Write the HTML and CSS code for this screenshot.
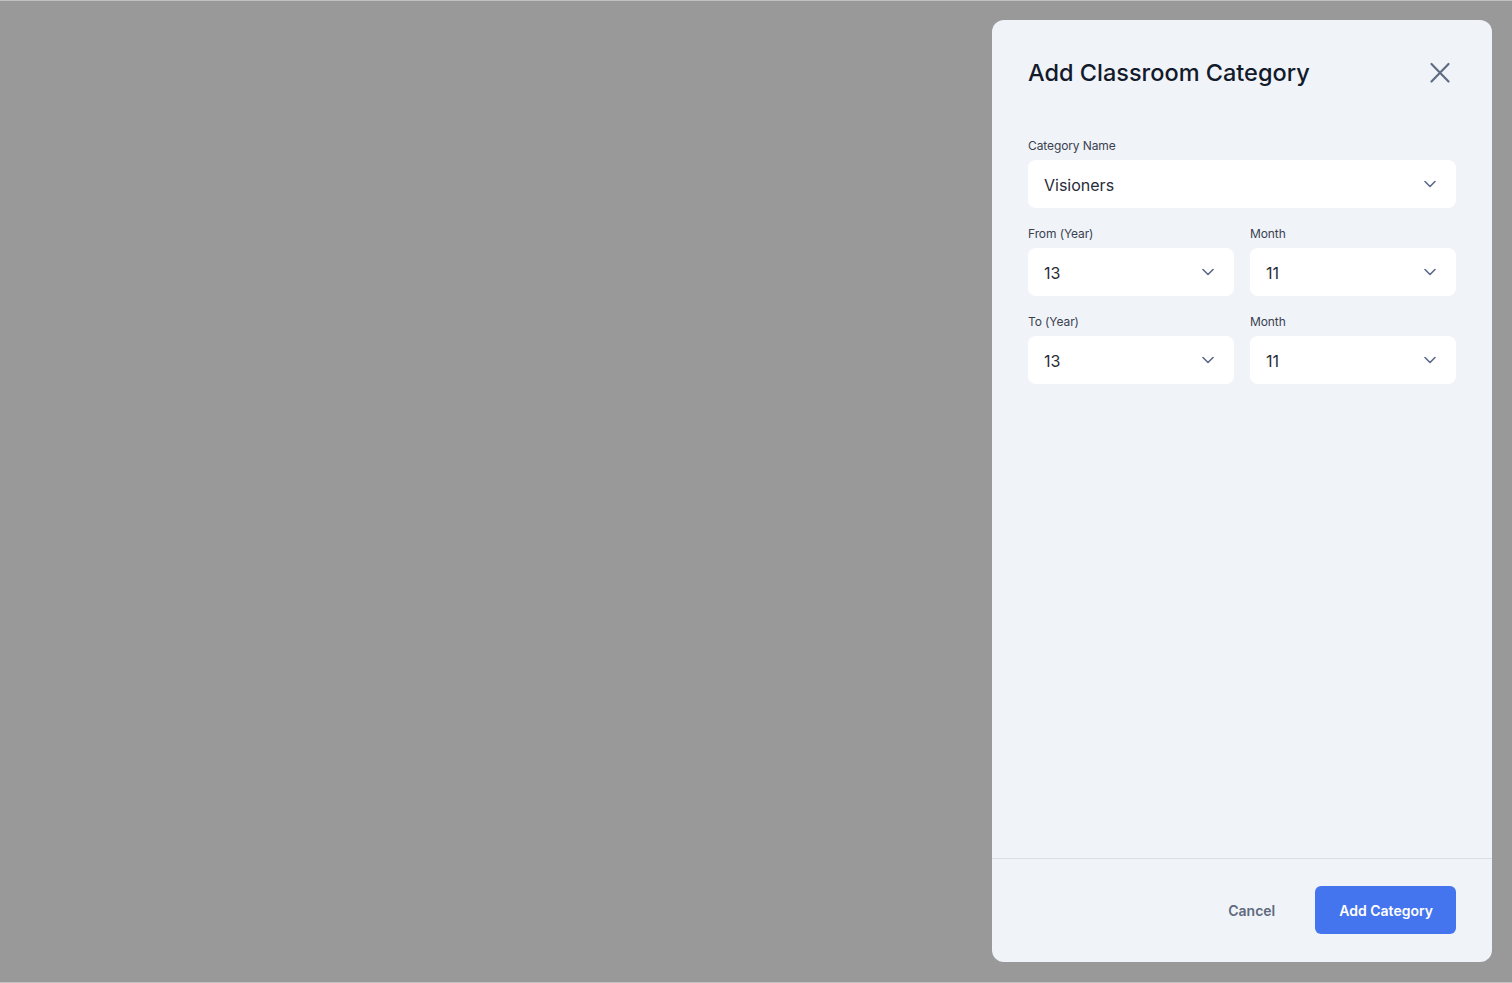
FILE: index.html
```html
<!DOCTYPE html>
<html lang="en">
<head>
<meta charset="utf-8">
<title>Add Classroom Category</title>
<link rel="stylesheet" href="styles.css">
</head>
<body>
<div class="overlay">
  <aside class="drawer">
    <header class="drawer-header">
      <h1 class="drawer-title">Add Classroom Category</h1>
      <button class="close-btn" aria-label="Close">
        <svg width="24" height="24" viewBox="0 0 24 24"><path d="M3.5 3 L20.5 20.5 M20.5 3 L3.5 20.5" fill="none" stroke="#5f6c83" stroke-width="2.2" stroke-linecap="round"/></svg>
      </button>
    </header>
    <div class="drawer-body">
      <div class="field">
        <label class="field-label">Category Name</label>
        <div class="select">
          <span class="select-value">Visioners</span>
          <svg class="chev" width="16" height="16" viewBox="0 0 16 16"><path d="M3 5.5 L8 10.5 L13 5.5" fill="none" stroke="#5b6a88" stroke-width="1.6" stroke-linecap="round" stroke-linejoin="round"/></svg>
        </div>
      </div>
      <div class="row">
        <div class="field">
          <label class="field-label">From (Year)</label>
          <div class="select">
            <span class="select-value">13</span>
            <svg class="chev" width="16" height="16" viewBox="0 0 16 16"><path d="M3 5.5 L8 10.5 L13 5.5" fill="none" stroke="#5b6a88" stroke-width="1.6" stroke-linecap="round" stroke-linejoin="round"/></svg>
          </div>
        </div>
        <div class="field">
          <label class="field-label">Month</label>
          <div class="select">
            <span class="select-value">11</span>
            <svg class="chev" width="16" height="16" viewBox="0 0 16 16"><path d="M3 5.5 L8 10.5 L13 5.5" fill="none" stroke="#5b6a88" stroke-width="1.6" stroke-linecap="round" stroke-linejoin="round"/></svg>
          </div>
        </div>
      </div>
      <div class="row">
        <div class="field">
          <label class="field-label">To (Year)</label>
          <div class="select">
            <span class="select-value">13</span>
            <svg class="chev" width="16" height="16" viewBox="0 0 16 16"><path d="M3 5.5 L8 10.5 L13 5.5" fill="none" stroke="#5b6a88" stroke-width="1.6" stroke-linecap="round" stroke-linejoin="round"/></svg>
          </div>
        </div>
        <div class="field">
          <label class="field-label">Month</label>
          <div class="select">
            <span class="select-value">11</span>
            <svg class="chev" width="16" height="16" viewBox="0 0 16 16"><path d="M3 5.5 L8 10.5 L13 5.5" fill="none" stroke="#5b6a88" stroke-width="1.6" stroke-linecap="round" stroke-linejoin="round"/></svg>
          </div>
        </div>
      </div>
    </div>
    <footer class="drawer-footer">
      <button class="btn-cancel">Cancel</button>
      <button class="btn-primary">Add Category</button>
    </footer>
  </aside>
</div>
</body>
</html>
```

FILE: styles.css
```css
* { box-sizing: border-box; }
html, body { margin: 0; padding: 0; }
body {
  font-family: Inter, "Noto Sans", "Liberation Sans", sans-serif;
  background: #999999;
  width: 1512px;
  height: 983px;
  overflow: hidden;
}
.overlay {
  height: 983px;
  border-top: 1px solid #c2c2c2;
  border-bottom: 1px solid #c2c2c2;
  display: flex;
  justify-content: flex-end;
  padding: 19px 20px 19px 0;
}
.drawer {
  width: 500px;
  height: 942px;
  background: #f0f4f9;
  border-radius: 12px;
  display: flex;
  flex-direction: column;
}
.drawer-header {
  display: flex;
  align-items: center;
  justify-content: space-between;
  padding: 36px 40px 0 36px;
}
.drawer-title {
  margin: 0;
  font-size: 23.5px;
  line-height: 34px;
  font-weight: 500;
  color: #131a2b;
  letter-spacing: 0;
}
.close-btn {
  border: 0;
  background: none;
  padding: 0;
  width: 24px;
  height: 24px;
  display: flex;
  cursor: pointer;
}
.drawer-body {
  flex: 1;
  padding: 46px 36px 0 36px;
  display: flex;
  flex-direction: column;
  gap: 16px;
}
.row {
  display: grid;
  grid-template-columns: 1fr 1fr;
  gap: 16px;
}
.field {
  display: flex;
  flex-direction: column;
  gap: 6px;
}
.field-label {
  font-size: 12px;
  line-height: 17px;
  padding-top: 1px;
  color: #3b414e;
  letter-spacing: -0.1px;
}
.select {
  height: 48px;
  background: #ffffff;
  border-radius: 8px;
  display: flex;
  align-items: center;
  justify-content: space-between;
  padding: 1px 18px 0 16px;
}
.select-value {
  font-size: 16px;
  color: #262c38;
}
.chev { flex: none; margin-top: -1px; }
.drawer-footer {
  border-top: 1px solid #d7dee8;
  display: flex;
  justify-content: flex-end;
  align-items: center;
  gap: 40px;
  padding: 27px 36px 28px 36px;
}
.btn-cancel {
  border: 0;
  background: none;
  font-family: inherit;
  font-size: 14px;
  font-weight: 600;
  color: #5f6a7f;
  padding: 0;
  cursor: pointer;
}
.btn-primary {
  border: 0;
  height: 48px;
  padding: 0 23px 0 24px;
  border-radius: 6px;
  background: #4475ee;
  color: #ffffff;
  font-family: inherit;
  font-size: 14px;
  font-weight: 600;
  cursor: pointer;
}
```
